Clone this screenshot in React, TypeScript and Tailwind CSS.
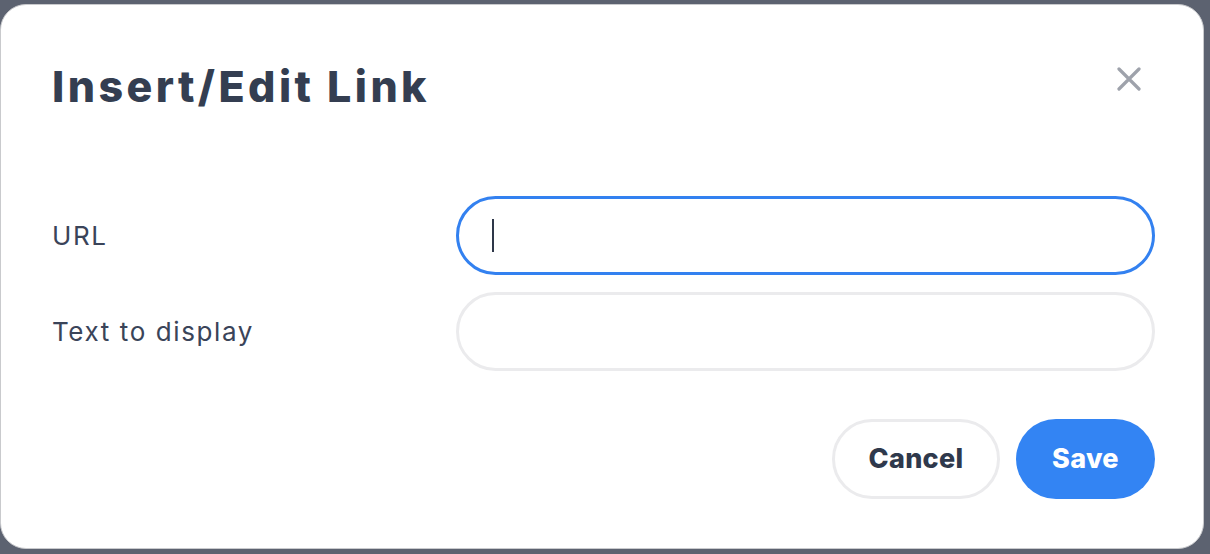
import React, { useState } from "react";

export default function App() {
  const [url, setUrl] = useState("");
  const [text, setText] = useState("");

  return (
    <div className="min-h-screen w-full bg-[#5c6270] pt-[4px] font-['Inter',sans-serif]">
      <div className="w-[1204px] h-[545px] bg-white rounded-[26px] border border-[#c9cacd] pl-[51px] pr-[48px] flex flex-col">
        {/* Header */}
        <div className="flex items-center justify-between h-[56px] mt-[53px]">
          <h2 className="text-[43px] font-[800] text-[#343e51] tracking-[3.4px] leading-none">
            Insert/Edit Link
          </h2>
          <button className="w-[48px] h-[48px] mb-[14px] mr-[2px] flex items-center justify-center text-[#9ea2ab]">
            <svg width="24" height="24" viewBox="0 0 24 24" fill="none">
              <path d="M2 2L22 22M22 2L2 22" stroke="currentColor" strokeWidth="3.2" strokeLinecap="round" />
            </svg>
          </button>
        </div>

        {/* Form */}
        <div className="flex flex-col gap-[17px] mt-[82px]">
          <div className="flex items-center">
            <label className="w-[404px] text-[26px] text-[#3a4459] tracking-[1.6px]">URL</label>
            <div className="flex-1 h-[79px] rounded-full border-[3px] border-[#3381f0] flex items-center px-[33px]">
              <span className="w-[2px] h-[33px] bg-[#2e3749]" />
              <input
                value={url}
                onChange={(e) => setUrl(e.target.value)}
                className="flex-1 outline-none text-[24px] bg-transparent"
              />
            </div>
          </div>
          <div className="flex items-center">
            <label className="w-[404px] text-[26px] text-[#3a4459] tracking-[1.6px]">Text to display</label>
            <div className="flex-1 h-[79px] rounded-full border-[3px] border-[#ebebed] flex items-center px-[34px]">
              <input
                value={text}
                onChange={(e) => setText(e.target.value)}
                className="flex-1 outline-none text-[24px] bg-transparent"
              />
            </div>
          </div>
        </div>

        {/* Buttons */}
        <div className="flex justify-end gap-[16px] mt-[48px]">
          <button className="w-[168px] h-[80px] rounded-full border-[3px] border-[#ebebed] text-[27px] font-[800] text-[#2f394c] tracking-[0.3px]">
            Cancel
          </button>
          <button className="w-[139px] h-[80px] rounded-full bg-[#3384f3] text-[27px] font-[800] text-white tracking-[0.3px]">
            Save
          </button>
        </div>
      </div>
    </div>
  );
}
